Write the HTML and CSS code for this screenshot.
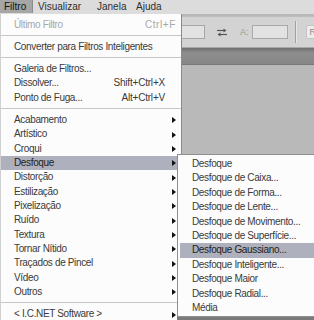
FILE: index.html
```html
<!DOCTYPE html>
<html lang="pt">
<head>
    <meta charset="UTF-8">
    <title>Filtro</title>
    <link rel="stylesheet" href="styles.css">
</head>
<body>
    <div class="app">
        <div class="menubar">
            <div class="bar-item active">Filtro</div>
            <div class="bar-item bar-view">Visualizar</div>
            <div class="bar-item bar-window">Janela</div>
            <div class="bar-item bar-help">Ajuda</div>
        </div>

        <div class="options">
            <span class="field field-w"></span>
            <svg class="swap" width="12" height="9" viewBox="0 0 12 9">
                <path d="M1 2.5h7" stroke="#555" stroke-width="1.2"/>
                <path d="M7.5 0.5l3 2-3 2z" fill="#555"/>
                <path d="M11 6.5H4" stroke="#555" stroke-width="1.2"/>
                <path d="M4.5 4.5l-3 2 3 2z" fill="#555"/>
            </svg>
            <span class="label">A:</span>
            <span class="field field-h"></span>
            <span class="divider"></span>
            <span class="btn">R</span>
        </div>

        <div class="tabs"></div>

        <div class="work">
            <div class="canvas"></div>
            <div class="scrollbar">
                <span class="scroll-up">
                    <svg width="7" height="5" viewBox="0 0 7 5">
                        <path d="M0.5 4L3.5 1l3 3" stroke="#9a9484" fill="none"/>
                    </svg>
                </span>
            </div>
        </div>
    </div>

    <div class="menu main-menu">
        <div class="item disabled"><span>Último Filtro</span><span class="shortcut last">Ctrl+F</span></div>
        <div class="sep"></div>
        <div class="item"><span>Converter para Filtros Inteligentes</span></div>
        <div class="sep"></div>
        <div class="item"><span>Galeria de Filtros...</span></div>
        <div class="item"><span>Dissolver...</span><span class="shortcut">Shift+Ctrl+X</span></div>
        <div class="item"><span>Ponto de Fuga...</span><span class="shortcut">Alt+Ctrl+V</span></div>
        <div class="sep"></div>
        <div class="item sub"><span>Acabamento</span><i class="arrow"></i></div>
        <div class="item sub"><span>Artístico</span><i class="arrow"></i></div>
        <div class="item sub"><span>Croqui</span><i class="arrow"></i></div>
        <div class="item sub selected"><span>Desfoque</span><i class="arrow"></i></div>
        <div class="item sub"><span>Distorção</span><i class="arrow"></i></div>
        <div class="item sub"><span>Estilização</span><i class="arrow"></i></div>
        <div class="item sub"><span>Pixelização</span><i class="arrow"></i></div>
        <div class="item sub"><span>Ruído</span><i class="arrow"></i></div>
        <div class="item sub"><span>Textura</span><i class="arrow"></i></div>
        <div class="item sub"><span>Tornar Nítido</span><i class="arrow"></i></div>
        <div class="item sub"><span>Traçados de Pincel</span><i class="arrow"></i></div>
        <div class="item sub"><span>Vídeo</span><i class="arrow"></i></div>
        <div class="item sub"><span>Outros</span><i class="arrow"></i></div>
        <div class="sep"></div>
        <div class="item sub"><span>&lt; I.C.NET Software &gt;</span><i class="arrow"></i></div>
    </div>

    <div class="menu submenu">
        <div class="item">Desfoque</div>
        <div class="item">Desfoque de Caixa...</div>
        <div class="item">Desfoque de Forma...</div>
        <div class="item">Desfoque de Lente...</div>
        <div class="item">Desfoque de Movimento...</div>
        <div class="item">Desfoque de Superfície...</div>
        <div class="item selected">Desfoque Gaussiano...</div>
        <div class="item">Desfoque Inteligente...</div>
        <div class="item">Desfoque Maior</div>
        <div class="item">Desfoque Radial...</div>
        <div class="item">Média</div>
    </div>
</body>
</html>
```

FILE: styles.css
```css
body {
    margin: 0;
    width: 314px;
    height: 320px;
    overflow: hidden;
    position: relative;
    font-family: "Liberation Sans", Arial, sans-serif;
    font-size: 10px;
    color: #3a3a3a;
    background-color: #b9b9b9;
}

.app {
    display: grid;
    grid-template-rows: 16px 32px 17px 1fr;
    height: 320px;
}

/* top menu bar */
.menubar {
    display: grid;
    grid-template-columns: 33px 59px 39px 1fr;
    background-color: #dcdcdc;
    height: 14px;
}

.bar-item {
    padding-left: 5px;
    line-height: 13px;
    height: 13px;
    color: #2e2e2e;
}

.bar-item.active {
    padding-left: 4px;
    background-color: #a6a6a6;
    border-right: 1px solid #8c8c8c;
    color: #111;
}

/* options bar */
.options {
    display: flex;
    align-items: center;
    background-color: #d3d3d3;
    border-top: 1px solid #bdbdbd;
    border-bottom: 1px solid #a9a9a9;
    padding-left: 168px;
}

.field {
    height: 12px;
    border: 1px solid #a9a9a9;
    background-color: #e2e2e2;
}

.field-w {
    width: 35px;
}

.field-h {
    width: 34px;
}

.swap {
    margin-left: 11px;
}

.label {
    margin-left: 12px;
    margin-right: 3px;
    color: #9a9a9a;
    font-size: 9px;
}

.divider {
    width: 1px;
    height: 22px;
    background-color: #a0a0a0;
    border-right: 1px solid #e6e6e6;
    margin-left: 7px;
}

.btn {
    margin-left: 9px;
    height: 12px;
    width: 20px;
    padding-left: 3px;
    line-height: 12px;
    border: 1px solid #c4c4c4;
    border-radius: 2px;
    background-color: #ececec;
    color: #8c8c8c;
    font-size: 9px;
}

.tabs {
    background: linear-gradient(#6f6f6f, #8d8d8d 30%, #878787);
    border-bottom: 1px solid #777;
}

.work {
    display: flex;
}

.canvas {
    flex: 1;
    background-color: #b9b9b9;
}

.scrollbar {
    width: 12px;
    background-color: #f6f6f6;
    border-left: 1px solid #a6a6a6;
    padding-top: 2px;
}

.scroll-up {
    display: flex;
    align-items: center;
    justify-content: center;
    width: 9px;
    height: 10px;
    margin-left: 1px;
    border: 1px solid #d8d2bf;
    background-color: #f0eee6;
}

/* drop down menus */
.menu {
    position: absolute;
    background-color: #fcfcfc;
    border: 1px solid #9c9c9c;
    box-sizing: border-box;
}

.main-menu {
    left: 0;
    top: 14px;
    width: 182px;
    padding-top: 3.5px;
    border-left-color: #d0d0d0;
    border-top: none;
    border-right-color: #8a8a8a;
    height: 320px;
}

.submenu {
    left: 177px;
    top: 154px;
    width: 137px;
    border-right: none;
    padding: 2px 0 0 2px;
    height: 163px;
    border-color: #8f8f8f;
    box-shadow: 0 3px 0 #7a7a7a;
}

.item {
    display: flex;
    align-items: center;
    height: 14.33px;
    line-height: 14.33px;
    padding: 0 5px 0 13px;
    letter-spacing: -0.35px;
    white-space: nowrap;
}

.submenu .item {
    height: 14.4px;
    line-height: 14.4px;
    padding-left: 12px;
}

.item.disabled {
    color: #a8a8a8;
}

.item.selected {
    background-color: #aeb0bd;
    color: #222;
}

.shortcut {
    margin-left: auto;
    padding-right: 11px;
    letter-spacing: -0.2px;
}

.shortcut.last {
    padding-right: 0;
    letter-spacing: 0.6px;
}

.arrow {
    margin-left: auto;
    width: 0;
    height: 0;
    border-left: 4px solid #111;
    border-top: 3.5px solid transparent;
    border-bottom: 3.5px solid transparent;
}

.sep {
    height: 8px;
    box-sizing: border-box;
    border-top: 3px solid transparent;
    background-clip: content-box;
}

.sep::after {
    content: "";
    display: block;
    height: 1px;
    background-color: #c6c6c6;
}
```
